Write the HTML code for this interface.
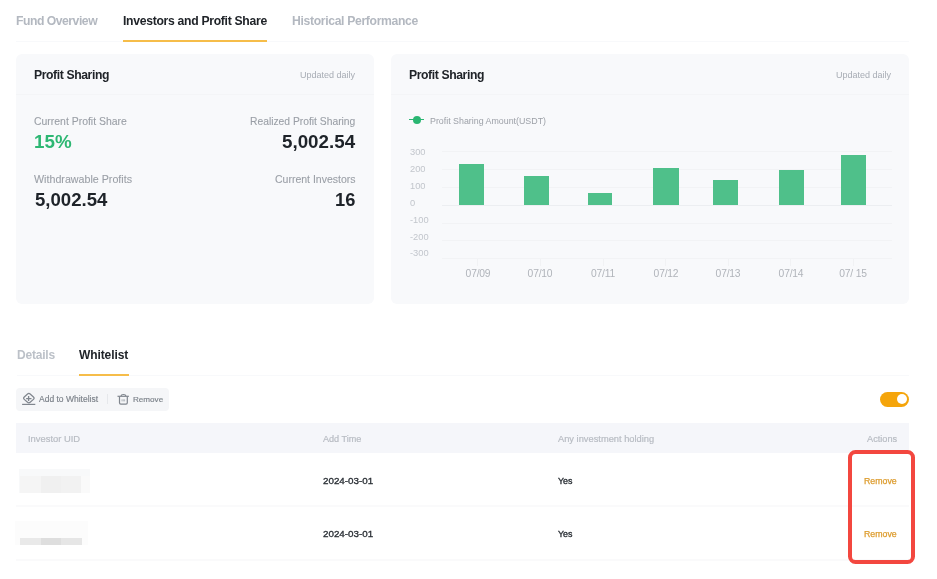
<!DOCTYPE html>
<html><head><meta charset="utf-8"><title>Investors and Profit Share</title>
<style>
html,body{margin:0;padding:0;background:#fff;width:937px;height:579px;overflow:hidden}
body{position:relative;font-family:"Liberation Sans",sans-serif}
.t{position:absolute;line-height:1;white-space:nowrap;will-change:transform}
.r{position:absolute}
</style></head><body>
<div class="t" style="left:16.40px;top:15.00px;font-size:12.2px;font-weight:700;color:#b3b8c0;letter-spacing:-0.48px;">Fund Overview</div>
<div class="t" style="left:122.70px;top:15.00px;font-size:12.2px;font-weight:700;color:#202429;letter-spacing:-0.3px;">Investors and Profit Share</div>
<div class="t" style="left:291.80px;top:15.00px;font-size:12.2px;font-weight:700;color:#b3b8c0;letter-spacing:-0.34px;">Historical Performance</div>
<div class="r" style="left:16px;top:41px;width:893.00px;height:1.00px;background:#f8f9fb;"></div>
<div class="r" style="left:122.6px;top:39.5px;width:144.70px;height:2.00px;background:#f6bd4a;"></div>
<div class="r" style="left:16.2px;top:53.6px;width:357.60px;height:250.40px;background:#f8f9fb;border-radius:6px;"></div>
<div class="r" style="left:391.3px;top:53.6px;width:517.90px;height:250.40px;background:#f8f9fb;border-radius:6px;"></div>
<div class="r" style="left:16.2px;top:94px;width:357.60px;height:1.00px;background:#f4f5f7;"></div>
<div class="r" style="left:391.3px;top:94px;width:517.90px;height:1.00px;background:#f4f5f7;"></div>
<div class="t" style="left:34.30px;top:69.00px;font-size:12.2px;font-weight:700;color:#202429;letter-spacing:-0.4px;">Profit Sharing</div>
<div class="t" style="right:581.70px;top:71.00px;font-size:9px;color:#a7acb4;">Updated daily</div>
<div class="t" style="left:34.00px;top:117.00px;font-size:10.45px;color:#9a9fa6;-webkit-text-stroke:0.1px #9a9fa6;">Current Profit Share</div>
<div class="t" style="left:34.30px;top:133.00px;font-size:18.8px;font-weight:700;color:#2db773;">15%</div>
<div class="t" style="right:581.30px;top:117.00px;font-size:10.3px;color:#9a9fa6;-webkit-text-stroke:0.1px #9a9fa6;">Realized Profit Sharing</div>
<div class="t" style="right:581.70px;top:133.00px;font-size:18.8px;font-weight:700;color:#1e2329;">5,002.54</div>
<div class="t" style="left:34.40px;top:174.00px;font-size:10.7px;color:#9a9fa6;-webkit-text-stroke:0.1px #9a9fa6;">Withdrawable Profits</div>
<div class="t" style="left:34.80px;top:191.00px;font-size:18.6px;font-weight:700;color:#1e2329;">5,002.54</div>
<div class="t" style="right:581.90px;top:174.00px;font-size:10.5px;color:#9a9fa6;-webkit-text-stroke:0.1px #9a9fa6;">Current Investors</div>
<div class="t" style="right:581.90px;top:191.00px;font-size:18.3px;font-weight:700;color:#1e2329;">16</div>
<div class="t" style="left:409.40px;top:69.00px;font-size:12.2px;font-weight:700;color:#202429;letter-spacing:-0.4px;">Profit Sharing</div>
<div class="t" style="right:45.80px;top:71.00px;font-size:9px;color:#a7acb4;">Updated daily</div>
<div class="r" style="left:409.2px;top:119px;width:15.20px;height:1.20px;background:#2ab672;"></div>
<div class="r" style="left:412.6px;top:115.5px;width:8px;height:8px;border-radius:50%;background:#2ab672"></div>
<div class="t" style="left:430.20px;top:117.00px;font-size:8.85px;color:#9da1a8;">Profit Sharing Amount(USDT)</div>
<div class="t" style="left:409.50px;top:148.00px;font-size:9.3px;color:#c2c6cc;">300</div>
<div class="t" style="left:409.50px;top:165.00px;font-size:9.3px;color:#c2c6cc;">200</div>
<div class="t" style="left:409.50px;top:182.00px;font-size:9.3px;color:#c2c6cc;">100</div>
<div class="t" style="left:409.50px;top:199.00px;font-size:9.3px;color:#c2c6cc;">0</div>
<div class="t" style="left:409.50px;top:216.00px;font-size:9.3px;color:#c2c6cc;">-100</div>
<div class="t" style="left:409.50px;top:233.00px;font-size:9.3px;color:#c2c6cc;">-200</div>
<div class="t" style="left:409.50px;top:249.00px;font-size:9.3px;color:#c2c6cc;">-300</div>
<div class="r" style="left:442px;top:151px;width:449.50px;height:1.00px;background:#f2f3f5;"></div>
<div class="r" style="left:442px;top:169px;width:449.50px;height:1.00px;background:#f2f3f5;"></div>
<div class="r" style="left:442px;top:187px;width:449.50px;height:1.00px;background:#f2f3f5;"></div>
<div class="r" style="left:442px;top:205px;width:449.50px;height:1.00px;background:#eceef1;"></div>
<div class="r" style="left:442px;top:223px;width:449.50px;height:1.00px;background:#f2f3f5;"></div>
<div class="r" style="left:442px;top:240px;width:449.50px;height:1.00px;background:#f2f3f5;"></div>
<div class="r" style="left:442px;top:258px;width:449.50px;height:1.00px;background:#f2f3f5;"></div>
<div class="r" style="left:477.2px;top:259px;width:1.00px;height:7.00px;background:#f1f2f4;"></div>
<div class="r" style="left:539.9px;top:259px;width:1.00px;height:7.00px;background:#f1f2f4;"></div>
<div class="r" style="left:602.9px;top:259px;width:1.00px;height:7.00px;background:#f1f2f4;"></div>
<div class="r" style="left:665.4px;top:259px;width:1.00px;height:7.00px;background:#f1f2f4;"></div>
<div class="r" style="left:727.5px;top:259px;width:1.00px;height:7.00px;background:#f1f2f4;"></div>
<div class="r" style="left:790.1px;top:259px;width:1.00px;height:7.00px;background:#f1f2f4;"></div>
<div class="r" style="left:852.8px;top:259px;width:1.00px;height:7.00px;background:#f1f2f4;"></div>
<div class="t" style="left:377.70px;width:200px;text-align:center;top:269.00px;font-size:10.3px;color:#b0b4ba;letter-spacing:-0.2px;white-space:pre;">07/09</div>
<div class="t" style="left:440.40px;width:200px;text-align:center;top:269.00px;font-size:10.3px;color:#b0b4ba;letter-spacing:-0.2px;white-space:pre;">07/10</div>
<div class="t" style="left:503.40px;width:200px;text-align:center;top:269.00px;font-size:10.3px;color:#b0b4ba;letter-spacing:-0.2px;white-space:pre;">07/11</div>
<div class="t" style="left:565.90px;width:200px;text-align:center;top:269.00px;font-size:10.3px;color:#b0b4ba;letter-spacing:-0.2px;white-space:pre;">07/12</div>
<div class="t" style="left:628.00px;width:200px;text-align:center;top:269.00px;font-size:10.3px;color:#b0b4ba;letter-spacing:-0.2px;white-space:pre;">07/13</div>
<div class="t" style="left:690.60px;width:200px;text-align:center;top:269.00px;font-size:10.3px;color:#b0b4ba;letter-spacing:-0.2px;white-space:pre;">07/14</div>
<div class="t" style="left:753.30px;width:200px;text-align:center;top:269.00px;font-size:10.3px;color:#b0b4ba;letter-spacing:-0.2px;white-space:pre;">07/ 15</div>
<div class="r" style="left:459.3px;top:164.2px;width:24.70px;height:41.00px;background:#4fc08a;"></div>
<div class="r" style="left:524.3px;top:176.3px;width:24.70px;height:28.90px;background:#4fc08a;"></div>
<div class="r" style="left:588.2px;top:192.6px;width:24.30px;height:12.60px;background:#4fc08a;"></div>
<div class="r" style="left:653.4px;top:168px;width:25.40px;height:37.20px;background:#4fc08a;"></div>
<div class="r" style="left:712.9px;top:179.9px;width:24.90px;height:25.30px;background:#4fc08a;"></div>
<div class="r" style="left:779px;top:170.3px;width:25.10px;height:34.90px;background:#4fc08a;"></div>
<div class="r" style="left:840.6px;top:155px;width:25.10px;height:50.20px;background:#4fc08a;"></div>
<div class="t" style="left:16.50px;top:349.00px;font-size:12px;font-weight:700;color:#bcc1c8;letter-spacing:-0.2px;">Details</div>
<div class="t" style="left:78.90px;top:349.00px;font-size:12px;font-weight:700;color:#202429;letter-spacing:-0.1px;">Whitelist</div>
<div class="r" style="left:16.9px;top:375px;width:892.10px;height:1.00px;background:#f8f9fb;"></div>
<div class="r" style="left:79px;top:373.6px;width:49.50px;height:2.00px;background:#f6bd4a;"></div>
<div class="r" style="left:16.4px;top:387.6px;width:153.10px;height:23.00px;background:#f5f6f8;border-radius:4px;"></div>
<svg class="r" style="left:21px;top:392px" width="16" height="14" viewBox="0 0 16 14">
<path d="M6.55 1.99 Q7.85 0.80 9.15 1.99 L12.45 5.01 Q13.75 6.20 12.45 7.37 L9.15 10.33 Q7.85 11.50 6.55 10.33 L3.25 7.37 Q1.95 6.20 3.25 5.01 Z" fill="none" stroke="#80868e" stroke-width="1.25"/>
<path d="M7.6 4.1 V8.9 M5.1 6.6 H10.5" stroke="#80868e" stroke-width="1.3"/>
<path d="M1.1 12.4 H14.3" stroke="#80868e" stroke-width="1.2"/>
</svg>
<div class="t" style="left:38.50px;top:395.00px;font-size:8.5px;color:#7b8189;-webkit-text-stroke:0.15px #7b8189;">Add to Whitelist</div>
<div class="r" style="left:107.2px;top:394.4px;width:1.00px;height:9.80px;background:#e6e8eb;"></div>
<svg class="r" style="left:117px;top:393px" width="13" height="12" viewBox="0 0 13 12">
<path d="M0.5 3.3 H11.9" stroke="#80868e" stroke-width="1.2"/>
<path d="M4.1 3.1 C4.2 0.9 8.7 0.9 8.8 3.1" fill="none" stroke="#80868e" stroke-width="1.1"/>
<path d="M2.5 3.6 V9.8 Q2.5 11.1 3.8 11.1 H9 Q10.3 11.1 10.3 9.8 V3.6" fill="none" stroke="#80868e" stroke-width="1.2"/>
<path d="M5.0 6.3 V8.4 M6.3 6.3 V8.4 M7.6 6.3 V8.4" stroke="#9aa0a7" stroke-width="0.7"/>
</svg>
<div class="t" style="left:132.80px;top:396.00px;font-size:8.1px;color:#7b8189;-webkit-text-stroke:0.15px #7b8189;">Remove</div>
<div class="r" style="left:879.8px;top:391.9px;width:29.30px;height:14.80px;background:#f5a50b;border-radius:8px;"></div>
<div class="r" style="left:896.9px;top:394.1px;width:10.3px;height:10.3px;border-radius:50%;background:#fff"></div>
<div class="r" style="left:16.3px;top:423.3px;width:892.70px;height:29.30px;background:#f5f6fa;"></div>
<div class="t" style="left:27.60px;top:434.00px;font-size:9.4px;color:#b8bcc3;-webkit-text-stroke:0.2px #b8bcc3;">Investor UID</div>
<div class="t" style="left:322.60px;top:435.00px;font-size:9.1px;color:#b8bcc3;-webkit-text-stroke:0.2px #b8bcc3;">Add Time</div>
<div class="t" style="left:557.70px;top:435.00px;font-size:9.3px;color:#b8bcc3;-webkit-text-stroke:0.2px #b8bcc3;">Any investment holding</div>
<div class="t" style="right:40.20px;top:435.00px;font-size:9.2px;color:#b8bcc3;-webkit-text-stroke:0.2px #b8bcc3;">Actions</div>
<div class="t" style="left:322.80px;top:476.00px;font-size:9.8px;color:#2b3036;-webkit-text-stroke:0.35px #2b3036;">2024-03-01</div>
<div class="t" style="left:557.90px;top:477.00px;font-size:8.9px;color:#2b3036;-webkit-text-stroke:0.35px #2b3036;">Yes</div>
<div class="t" style="right:40.00px;top:477.00px;font-size:8.8px;color:#dc9b2c;-webkit-text-stroke:0.25px #dc9b2c;">Remove</div>
<div class="t" style="left:322.80px;top:529.00px;font-size:9.8px;color:#2b3036;-webkit-text-stroke:0.35px #2b3036;">2024-03-01</div>
<div class="t" style="left:557.90px;top:530.00px;font-size:8.9px;color:#2b3036;-webkit-text-stroke:0.35px #2b3036;">Yes</div>
<div class="t" style="right:40.00px;top:530.00px;font-size:8.8px;color:#dc9b2c;-webkit-text-stroke:0.25px #dc9b2c;">Remove</div>
<div class="r" style="left:16px;top:505px;width:893.00px;height:2.00px;background:#fafafb;"></div>
<div class="r" style="left:16px;top:559px;width:893.00px;height:2.00px;background:#fafafb;"></div>
<div class="r" style="left:18.6px;top:468.8px;width:71.10px;height:23.90px;background:#f8f9fa;"></div>
<div class="r" style="left:20.1px;top:475.5px;width:20.60px;height:17.20px;background:#f5f5f5;"></div>
<div class="r" style="left:40.7px;top:475.5px;width:20.20px;height:17.20px;background:#f0f0f0;"></div>
<div class="r" style="left:60.9px;top:475.5px;width:20.20px;height:17.20px;background:#f2f2f2;"></div>
<div class="r" style="left:81.1px;top:475.5px;width:8.60px;height:17.20px;background:#fafafa;"></div>
<div class="r" style="left:14.8px;top:521.1px;width:73.00px;height:23.60px;background:#fcfcfc;"></div>
<div class="r" style="left:20.1px;top:537.5px;width:20.60px;height:7.20px;background:#e9e9e9;"></div>
<div class="r" style="left:40.7px;top:537.5px;width:20.20px;height:7.20px;background:#dedede;"></div>
<div class="r" style="left:60.9px;top:537.5px;width:20.70px;height:7.20px;background:#e6e6e6;"></div>
<div class="r" style="left:848.4px;top:449.6px;width:66.2px;height:114.8px;box-sizing:border-box;border:4px solid #f3473f;border-radius:7.5px"></div>
</body></html>
